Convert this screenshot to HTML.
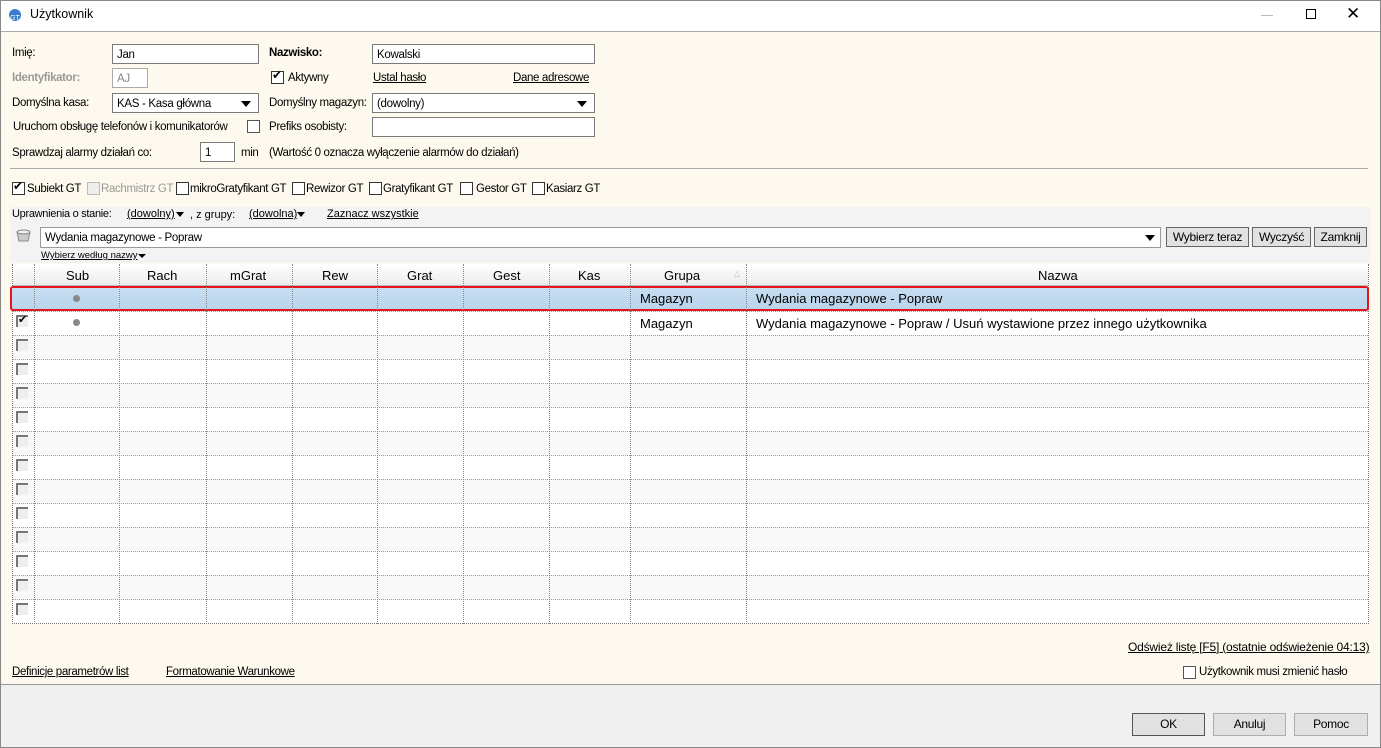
<!DOCTYPE html>
<html><head><meta charset="utf-8"><style>
*{box-sizing:border-box;margin:0;padding:0}
body{width:1381px;height:748px;position:relative;overflow:hidden;background:#fff;font-family:"Liberation Sans",Arial,sans-serif;font-size:12px;color:#000}
.a{position:absolute;white-space:nowrap}
.s{font-size:11.5px;letter-spacing:-0.35px}
.inp{position:absolute;background:#fff;border:1px solid #7a7a7a;height:20px;padding:3px 4px 0;font-size:11.5px;letter-spacing:-0.3px;line-height:14px}
.u{text-decoration:underline}
.cb{position:absolute;width:13px;height:13px;border:1px solid #333;background:#fff}
.tri{position:absolute;width:0;height:0;border-left:5px solid transparent;border-right:5px solid transparent;border-top:6px solid #000}
.btn{position:absolute;border:1px solid #adadad;background:#e1e1e1;text-align:center;font-size:12px;letter-spacing:-0.3px}
.g{position:absolute;font-size:13px;font-family:"Liberation Sans",Arial,sans-serif}
</style></head><body>
<div class="a" style="left:0;top:0;width:1381px;height:748px;border:1px solid #888"></div>
<svg class="a" style="left:8px;top:8px" width="14" height="14"><circle cx="7" cy="7" r="6" fill="#3a7dc9"/><text x="2" y="12" font-size="7" fill="#fff" font-family="Liberation Sans">GT</text></svg>
<div class="a" style="left:30px;top:7px;font-size:12.5px">Użytkownik</div>
<div class="a" style="left:1261px;top:15px;width:12px;height:1px;background:#bbb"></div>
<div class="a" style="left:1306px;top:9px;width:10px;height:10px;border:1px solid #000"></div>
<div class="a" style="left:1346px;top:4px;font-size:17px;line-height:20px">✕</div>
<div class="a" style="left:1px;top:31px;width:1379px;height:653px;background:#fef9ee;border-top:1px solid #aaa"></div>
<div class="a" style="left:1px;top:684px;width:1379px;height:63px;background:#f0f0f0;border-top:1px solid #999"></div>

<div class="a s" style="left:12px;top:47px">Imię:</div>
<div class="inp" style="left:112px;top:44px;width:147px">Jan</div>
<div class="a s" style="left:269px;top:47px;font-weight:bold">Nazwisko:</div>
<div class="inp" style="left:372px;top:44px;width:223px">Kowalski</div>

<div class="a s" style="left:12px;top:72px;color:#999;font-weight:bold">Identyfikator:</div>
<div class="inp" style="left:112px;top:68px;width:36px;color:#888;border-color:#aaa">AJ</div>
<div class="cb" style="left:271px;top:71px"></div><div class="a" style="left:272px;top:68px;font-size:12px">✔</div>
<div class="a s" style="left:288px;top:72px">Aktywny</div>
<div class="a s u" style="left:373px;top:72px">Ustal hasło</div>
<div class="a s u" style="left:513px;top:72px">Dane adresowe</div>

<div class="a s" style="left:12px;top:97px">Domyślna kasa:</div>
<div class="inp" style="left:112px;top:93px;width:147px">KAS - Kasa główna</div><div class="tri" style="left:241px;top:101px"></div>
<div class="a s" style="left:269px;top:97px">Domyślny magazyn:</div>
<div class="inp" style="left:372px;top:93px;width:223px">(dowolny)</div><div class="tri" style="left:577px;top:101px"></div>

<div class="a s" style="left:13px;top:121px">Uruchom obsługę telefonów i komunikatorów</div>
<div class="cb" style="left:247px;top:120px;border-color:#555"></div>
<div class="a s" style="left:269px;top:121px">Prefiks osobisty:</div>
<div class="inp" style="left:372px;top:117px;width:223px"></div>

<div class="a s" style="left:12px;top:147px">Sprawdzaj alarmy działań co:</div>
<div class="inp" style="left:200px;top:142px;width:35px">1</div>
<div class="a s" style="left:241px;top:147px">min</div>
<div class="a s" style="left:269px;top:147px">(Wartość 0 oznacza wyłączenie alarmów do działań)</div>

<div class="a" style="left:10px;top:168px;width:1358px;height:1px;background:#aaa"></div>

<div class="cb" style="left:12px;top:182px"></div><div class="a" style="left:13px;top:179px">✔</div>
<div class="a s" style="left:27px;top:183px">Subiekt GT</div>
<div class="cb" style="left:87px;top:182px;border-color:#bbb;background:#eee"></div>
<div class="a s" style="left:101px;top:183px;color:#999">Rachmistrz GT</div>
<div class="cb" style="left:176px;top:182px"></div><div class="a s" style="left:190px;top:183px">mikroGratyfikant GT</div>
<div class="cb" style="left:292px;top:182px"></div><div class="a s" style="left:306px;top:183px">Rewizor GT</div>
<div class="cb" style="left:369px;top:182px"></div><div class="a s" style="left:383px;top:183px">Gratyfikant GT</div>
<div class="cb" style="left:460px;top:182px"></div><div class="a s" style="left:476px;top:183px">Gestor GT</div>
<div class="cb" style="left:532px;top:182px"></div><div class="a s" style="left:546px;top:183px">Kasiarz GT</div>

<div class="a" style="left:10px;top:207px;width:1360px;height:56px;background:#f3f3f3"></div>
<div class="a" style="left:12px;top:208px;font-size:11px;letter-spacing:-0.3px">Uprawnienia o stanie:</div>
<div class="a u" style="left:127px;top:208px;font-size:11px">(dowolny)</div><div class="tri" style="left:176px;top:212px;border-width:5px 4px 0 4px"></div>
<div class="a" style="left:190px;top:209px;font-size:11px">, z grupy:</div>
<div class="a u" style="left:249px;top:208px;font-size:11px">(dowolna)</div><div class="tri" style="left:297px;top:212px;border-width:5px 4px 0 4px"></div>
<div class="a u" style="left:327px;top:208px;font-size:11px">Zaznacz wszystkie</div>
<svg class="a" style="left:16px;top:229px" width="16" height="14"><path d="M1 3h13l-2 9H3z" fill="#ccc" stroke="#888"/><ellipse cx="7.5" cy="3" rx="6.5" ry="2" fill="#eee" stroke="#888"/></svg>
<div class="inp" style="left:40px;top:227px;width:1121px;height:21px;border-color:#999">Wydania magazynowe - Popraw</div><div class="tri" style="left:1145px;top:235px"></div>
<div class="btn" style="left:1166px;top:227px;width:83px;height:20px;line-height:18px;border-color:#666">Wybierz teraz</div>
<div class="btn" style="left:1252px;top:227px;width:59px;height:20px;line-height:18px;border-color:#666">Wyczyść</div>
<div class="btn" style="left:1314px;top:227px;width:53px;height:20px;line-height:18px;border-color:#666">Zamknij</div>
<div class="a u" style="left:41px;top:250px;font-size:9.5px">Wybierz według nazwy</div><div class="tri" style="left:138px;top:254px;border-width:4px 4px 0 4px"></div>

<div class="a" style="left:12px;top:264px;width:1357px;height:360px;background:#fff;border:1px dotted #777"></div>
<div class="a" style="left:13px;top:264px;width:1355px;height:22px;background:linear-gradient(#fff,#ececec);border-bottom:1px solid #bbb"></div>
<div id="rows"></div>
<div class="a" style="left:10px;top:286px;width:1359px;height:25px;background:linear-gradient(#c7ddf1,#b9d4ec);border:2px solid #e8141c;border-radius:3px"></div>
<div id="cols"></div>
<div class="g" style="left:66px;top:268px">Sub</div>
<div class="g" style="left:147px;top:268px">Rach</div>
<div class="g" style="left:230px;top:268px">mGrat</div>
<div class="g" style="left:322px;top:268px">Rew</div>
<div class="g" style="left:407px;top:268px">Grat</div>
<div class="g" style="left:493px;top:268px">Gest</div>
<div class="g" style="left:578px;top:268px">Kas</div>
<div class="g" style="left:664px;top:268px">Grupa</div>
<div class="a" style="left:734px;top:269px;font-size:8px;color:#bbb">△</div>
<div class="g" style="left:1038px;top:268px">Nazwa</div>
<div class="a" style="left:73px;top:295px;width:7px;height:7px;border-radius:50%;background:#888"></div>
<div class="a" style="left:73px;top:319px;width:7px;height:7px;border-radius:50%;background:#888"></div>
<div class="g" style="left:640px;top:291px">Magazyn</div>
<div class="g" style="left:756px;top:291px">Wydania magazynowe - Popraw</div>
<div class="g" style="left:640px;top:316px">Magazyn</div>
<div class="g" style="left:756px;top:316px">Wydania magazynowe - Popraw / Usuń wystawione przez innego użytkownika</div>
<div class="a" style="left:18px;top:315px;font-size:11px;line-height:11px">✔</div>

<div class="a u" style="left:1128px;top:640px;font-size:12px;letter-spacing:-0.2px">Odśwież listę [F5] (ostatnie odświeżenie 04:13)</div>
<div class="cb" style="left:1183px;top:666px;border-color:#555"></div>
<div class="a s" style="left:1199px;top:666px">Użytkownik musi zmienić hasło</div>
<div class="a s u" style="left:12px;top:666px">Definicje parametrów list</div>
<div class="a s u" style="left:166px;top:666px">Formatowanie Warunkowe</div>

<div class="btn" style="left:1132px;top:713px;width:73px;height:23px;line-height:21px;border-color:#555">OK</div>
<div class="btn" style="left:1213px;top:713px;width:73px;height:23px;line-height:21px">Anuluj</div>
<div class="btn" style="left:1294px;top:713px;width:74px;height:23px;line-height:21px">Pomoc</div>

<script>
var r='';for(var i=0;i<14;i++){var y=287+i*24;
if(i>0)r+='<div class="a" style="left:13px;top:'+y+'px;width:1355px;height:24px;background:'+(i%2?'#fff':'#f8f8f8')+';border-top:1px dotted #999"></div>';
r+='<div class="a" style="left:16px;top:'+(y+4)+'px;width:12px;height:12px;background:#eee;border-left:2px solid #777;border-top:2px solid #777"></div>';}
r+='<div class="a" style="left:13px;top:335px;width:1355px;height:1px;border-top:1px dotted #999"></div>';
document.getElementById('rows').innerHTML=r;
var c='';[34,119,206,292,377,463,549,630,746].forEach(function(x){c+='<div class="a" style="left:'+x+'px;top:264px;width:1px;height:360px;border-left:1px dotted #888"></div>'});
document.getElementById('cols').innerHTML=c;
</script>
</body></html>
